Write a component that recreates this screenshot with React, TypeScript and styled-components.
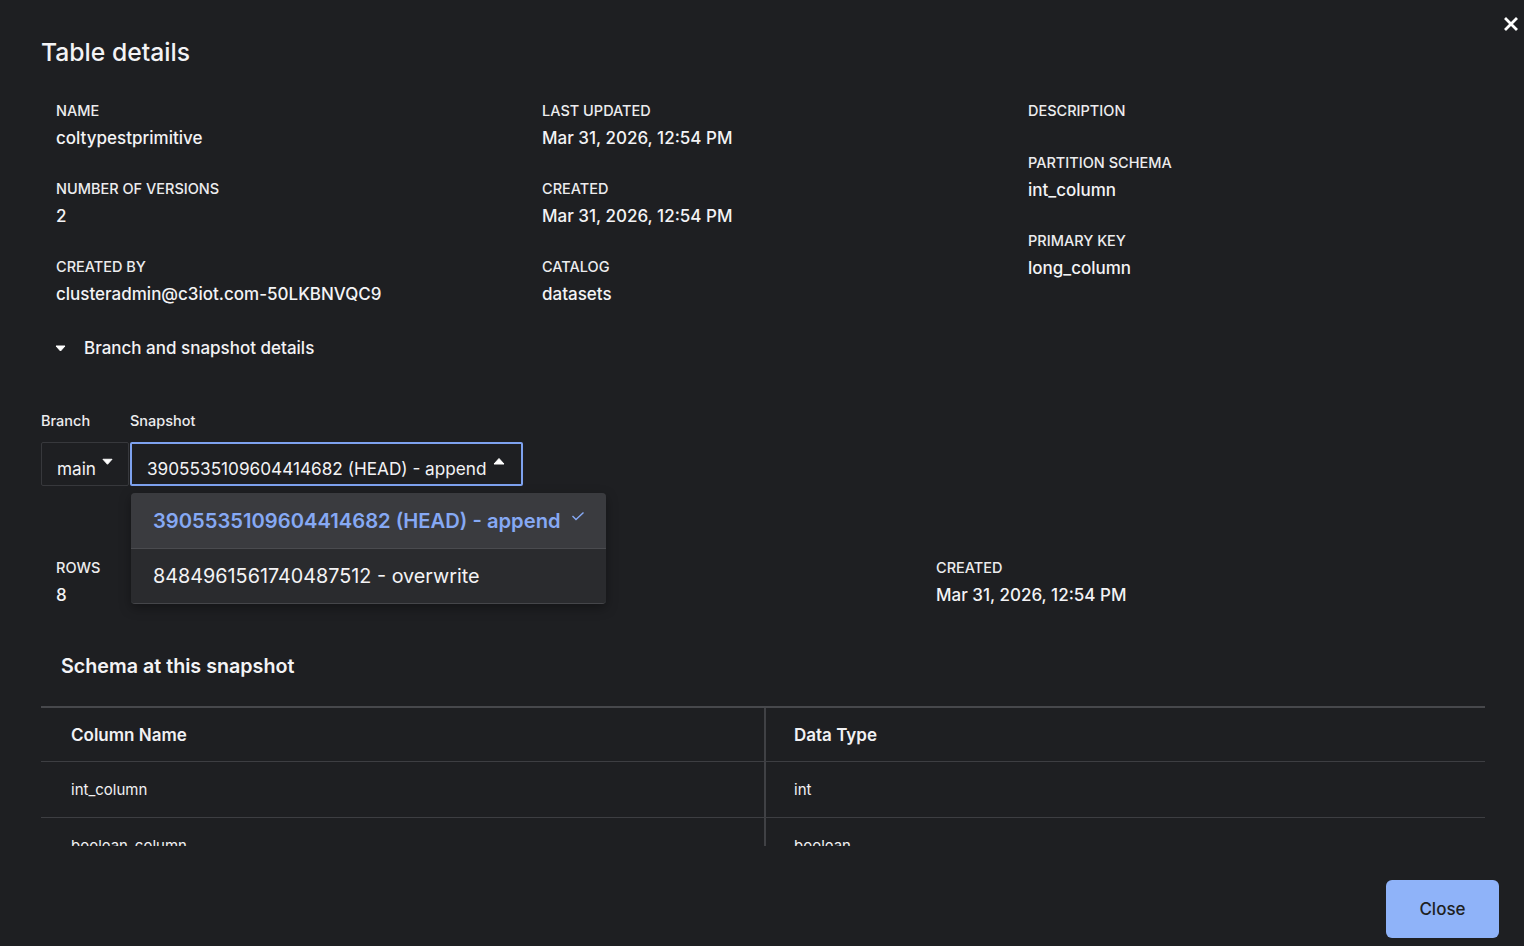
import React from "react";
import styled, { createGlobalStyle } from "styled-components";

const Global = createGlobalStyle`
  html, body { margin: 0; padding: 0; background: #1e1f22; }
  body { font-family: Inter, "Noto Sans", sans-serif; color: #f1f1f3; -webkit-font-smoothing: antialiased; }
  * { box-sizing: border-box; }
`;

const Modal = styled.div`
  position: relative;
  display: flex;
  flex-direction: column;
  height: 946px;
  width: 1524px;
  background: #1e1f22;
`;

const CloseX = styled.button`
  position: absolute;
  top: 16px;
  right: 5px;
  width: 16px;
  height: 16px;
  padding: 0;
  border: 0;
  background: transparent;
  color: #ffffff;
  display: flex;
  align-items: center;
  justify-content: center;
  cursor: pointer;
`;

const ScrollArea = styled.div`
  height: 846px;
  overflow: hidden;
  padding: 36px 39px 0 41px;
`;

const Title = styled.h1`
  margin: 0;
  font-size: 24.7px;
  line-height: 32px;
  font-weight: 500;
  color: #f3f3f5;
`;

const FieldGrid = styled.div<{ $col: number; $top: number }>`
  display: grid;
  grid-template-columns: repeat(3, ${(p) => p.$col}px);
  margin-top: ${(p) => p.$top}px;
  padding-left: 15px;
`;

const FieldColumn = styled.div`
  display: flex;
  flex-direction: column;
  gap: 28px;
`;

const Field = styled.div`
  display: flex;
  flex-direction: column;
`;

const Label = styled.div`
  font-size: 14.5px;
  line-height: 20px;
  font-weight: 500;
  text-transform: uppercase;
  color: #ececee;
`;

const Value = styled.div`
  margin-top: 4px;
  font-size: 17px;
  line-height: 26px;
  font-weight: 500;
  color: #f3f3f5;
`;

const Toggle = styled.div`
  display: flex;
  align-items: center;
  gap: 18px;
  margin-top: 29px;
  padding-left: 14px;
  font-size: 17px;
  line-height: 24px;
  font-weight: 500;
  color: #f3f3f5;
`;

const Selectors = styled.div`
  display: flex;
  gap: 1px;
  margin-top: 51px;
`;

const SelectGroup = styled.div`
  position: relative;
  display: flex;
  flex-direction: column;
  gap: 11px;
`;

const SmallLabel = styled.div`
  font-size: 14.5px;
  line-height: 20px;
  font-weight: 500;
  color: #ececee;
`;

const SelectBox = styled.div<{ $width: number; $active?: boolean }>`
  width: ${(p) => p.$width}px;
  height: 44px;
  display: flex;
  align-items: center;
  gap: 6px;
  padding: 9px 15px 0 15px;
  border: ${(p) => (p.$active ? "2px solid #7ea2ef" : "1px solid #37383c")};
  border-radius: 2px;
  font-size: 17.2px;
  font-weight: 400;
  color: #f3f3f5;
  white-space: nowrap;
`;

const Menu = styled.div`
  position: absolute;
  top: calc(100% + 7px);
  left: 1px;
  width: 475px;
  background: #2a2b2e;
  border-radius: 4px;
  border-bottom: 1px solid #45464a;
  box-shadow: 0 4px 12px rgba(0, 0, 0, 0.35);
  overflow: hidden;
  z-index: 5;
`;

const MenuItem = styled.div<{ $selected?: boolean }>`
  height: ${(p) => (p.$selected ? 56 : 54)}px;
  display: flex;
  align-items: center;
  padding-left: 22px;
  font-size: ${(p) => (p.$selected ? 20.2 : 19.8)}px;
  font-weight: ${(p) => (p.$selected ? 600 : 400)};
  color: ${(p) => (p.$selected ? "#86a9f4" : "#f3f3f5")};
  background: ${(p) => (p.$selected ? "#3a3b3f" : "#2a2b2e")};
  border-bottom: ${(p) => (p.$selected ? "1px solid #4a4b4f" : "0")};
`;

const CheckMark = styled.span`
  display: inline-flex;
  margin-left: 10px;
  margin-top: -10px;
  color: #86a9f4;
`;

const SchemaHeading = styled.h2`
  margin: 45px 0 0;
  padding-left: 20px;
  font-size: 19.7px;
  line-height: 26px;
  font-weight: 600;
  color: #f3f3f5;
`;

const Table = styled.div`
  margin-top: 27px;
  width: 1444px;
  border-top: 2px solid #47484c;
  display: grid;
  grid-template-columns: 723px 721px;
`;

const Cell = styled.div<{ $head?: boolean; $right?: boolean }>`
  height: ${(p) => (p.$head ? 54 : 56)}px;
  display: flex;
  align-items: center;
  padding-left: ${(p) => (p.$right ? 28 : 30)}px;
  border-bottom: 1px solid #3d3e42;
  border-left: ${(p) => (p.$right ? "2px solid #404145" : "0")};
  font-size: ${(p) => (p.$head ? 17 : 15)}px;
  font-weight: ${(p) => (p.$head ? 600 : 400)};
  color: #f1f1f3;
`;

const Footer = styled.div`
  height: 100px;
  display: flex;
  justify-content: flex-end;
  align-items: flex-start;
  padding: 34px 25px 0 0;
`;

const CloseButton = styled.button`
  width: 113px;
  height: 58px;
  border: 0;
  border-radius: 6px;
  background: #8fb3f9;
  color: #1e1f22;
  font-family: Inter, "Noto Sans", sans-serif;
  font-size: 17px;
  font-weight: 500;
  cursor: pointer;
`;

const Caret = ({ up }: { up?: boolean }) => (
  <svg width="12" height="8" viewBox="0 0 12 8" style={{ marginTop: up ? -16 : -14 }}>
    <path d={up ? "M1 7 L6 1.5 L11 7 Z" : "M1 1 L11 1 L6 6.5 Z"} fill="#ffffff" strokeLinejoin="round" stroke="#ffffff" strokeWidth="1" />
  </svg>
);

const ToggleCaret = () => (
  <svg width="11" height="7" viewBox="0 0 11 7">
    <path d="M1 1 L10 1 L5.5 6 Z" fill="#ffffff" stroke="#ffffff" strokeWidth="1" strokeLinejoin="round" />
  </svg>
);

type F = { label: string; value?: string };

const cols: F[][] = [
  [
    { label: "Name", value: "coltypestprimitive" },
    { label: "Number of versions", value: "2" },
    { label: "Created by", value: "clusteradmin@c3iot.com-50LKBNVQC9" },
  ],
  [
    { label: "Last updated", value: "Mar 31, 2026, 12:54 PM" },
    { label: "Created", value: "Mar 31, 2026, 12:54 PM" },
    { label: "Catalog", value: "datasets" },
  ],
  [
    { label: "Description", value: "" },
    { label: "Partition schema", value: "int_column" },
    { label: "Primary key", value: "long_column" },
  ],
];

const stats: F[][] = [
  [{ label: "Rows", value: "8" }],
  [],
  [{ label: "Created", value: "Mar 31, 2026, 12:54 PM" }],
];

const rows = [
  ["int_column", "int"],
  ["boolean_column", "boolean"],
  ["long_column", "long"],
];

const renderCols = (data: F[][]) =>
  data.map((c, i) => (
    <FieldColumn key={i}>
      {c.map((f) => (
        <Field key={f.label}>
          <Label>{f.label}</Label>
          <Value>{f.value}</Value>
        </Field>
      ))}
    </FieldColumn>
  ));

export default function App() {
  return (
    <Modal>
      <Global />
      <CloseX aria-label="Close">
        <svg width="14" height="14" viewBox="0 0 14 14">
          <path d="M2 2 L12 12 M12 2 L2 12" stroke="#ffffff" strokeWidth="2.8" strokeLinecap="square" />
        </svg>
      </CloseX>
      <ScrollArea>
        <Title>Table details</Title>
        <FieldGrid $col={486} $top={33}>{renderCols(cols)}</FieldGrid>
        <Toggle>
          <ToggleCaret />
          <span>Branch and snapshot details</span>
        </Toggle>
        <Selectors>
          <SelectGroup>
            <SmallLabel>Branch</SmallLabel>
            <SelectBox $width={88}>
              main <Caret />
            </SelectBox>
          </SelectGroup>
          <SelectGroup>
            <SmallLabel>Snapshot</SmallLabel>
            <SelectBox $width={393} $active>
              3905535109604414682 (HEAD) - append <Caret up />
            </SelectBox>
            <Menu>
              <MenuItem $selected>
                3905535109604414682 (HEAD) - append
                <CheckMark>
                  <svg width="14" height="10" viewBox="0 0 14 10">
                    <path d="M1.5 5 L5 8.5 L12.5 1.5" fill="none" stroke="#86a9f4" strokeWidth="1.4" />
                  </svg>
                </CheckMark>
              </MenuItem>
              <MenuItem>8484961561740487512 - overwrite</MenuItem>
            </Menu>
          </SelectGroup>
        </Selectors>
        <FieldGrid $col={440} $top={72}>{renderCols(stats)}</FieldGrid>
        <SchemaHeading>Schema at this snapshot</SchemaHeading>
        <Table>
          <Cell $head>Column Name</Cell>
          <Cell $head $right>Data Type</Cell>
          {rows.map(([n, t]) => (
            <React.Fragment key={n}>
              <Cell>{n}</Cell>
              <Cell $right>{t}</Cell>
            </React.Fragment>
          ))}
        </Table>
      </ScrollArea>
      <Footer>
        <CloseButton>Close</CloseButton>
      </Footer>
    </Modal>
  );
}
